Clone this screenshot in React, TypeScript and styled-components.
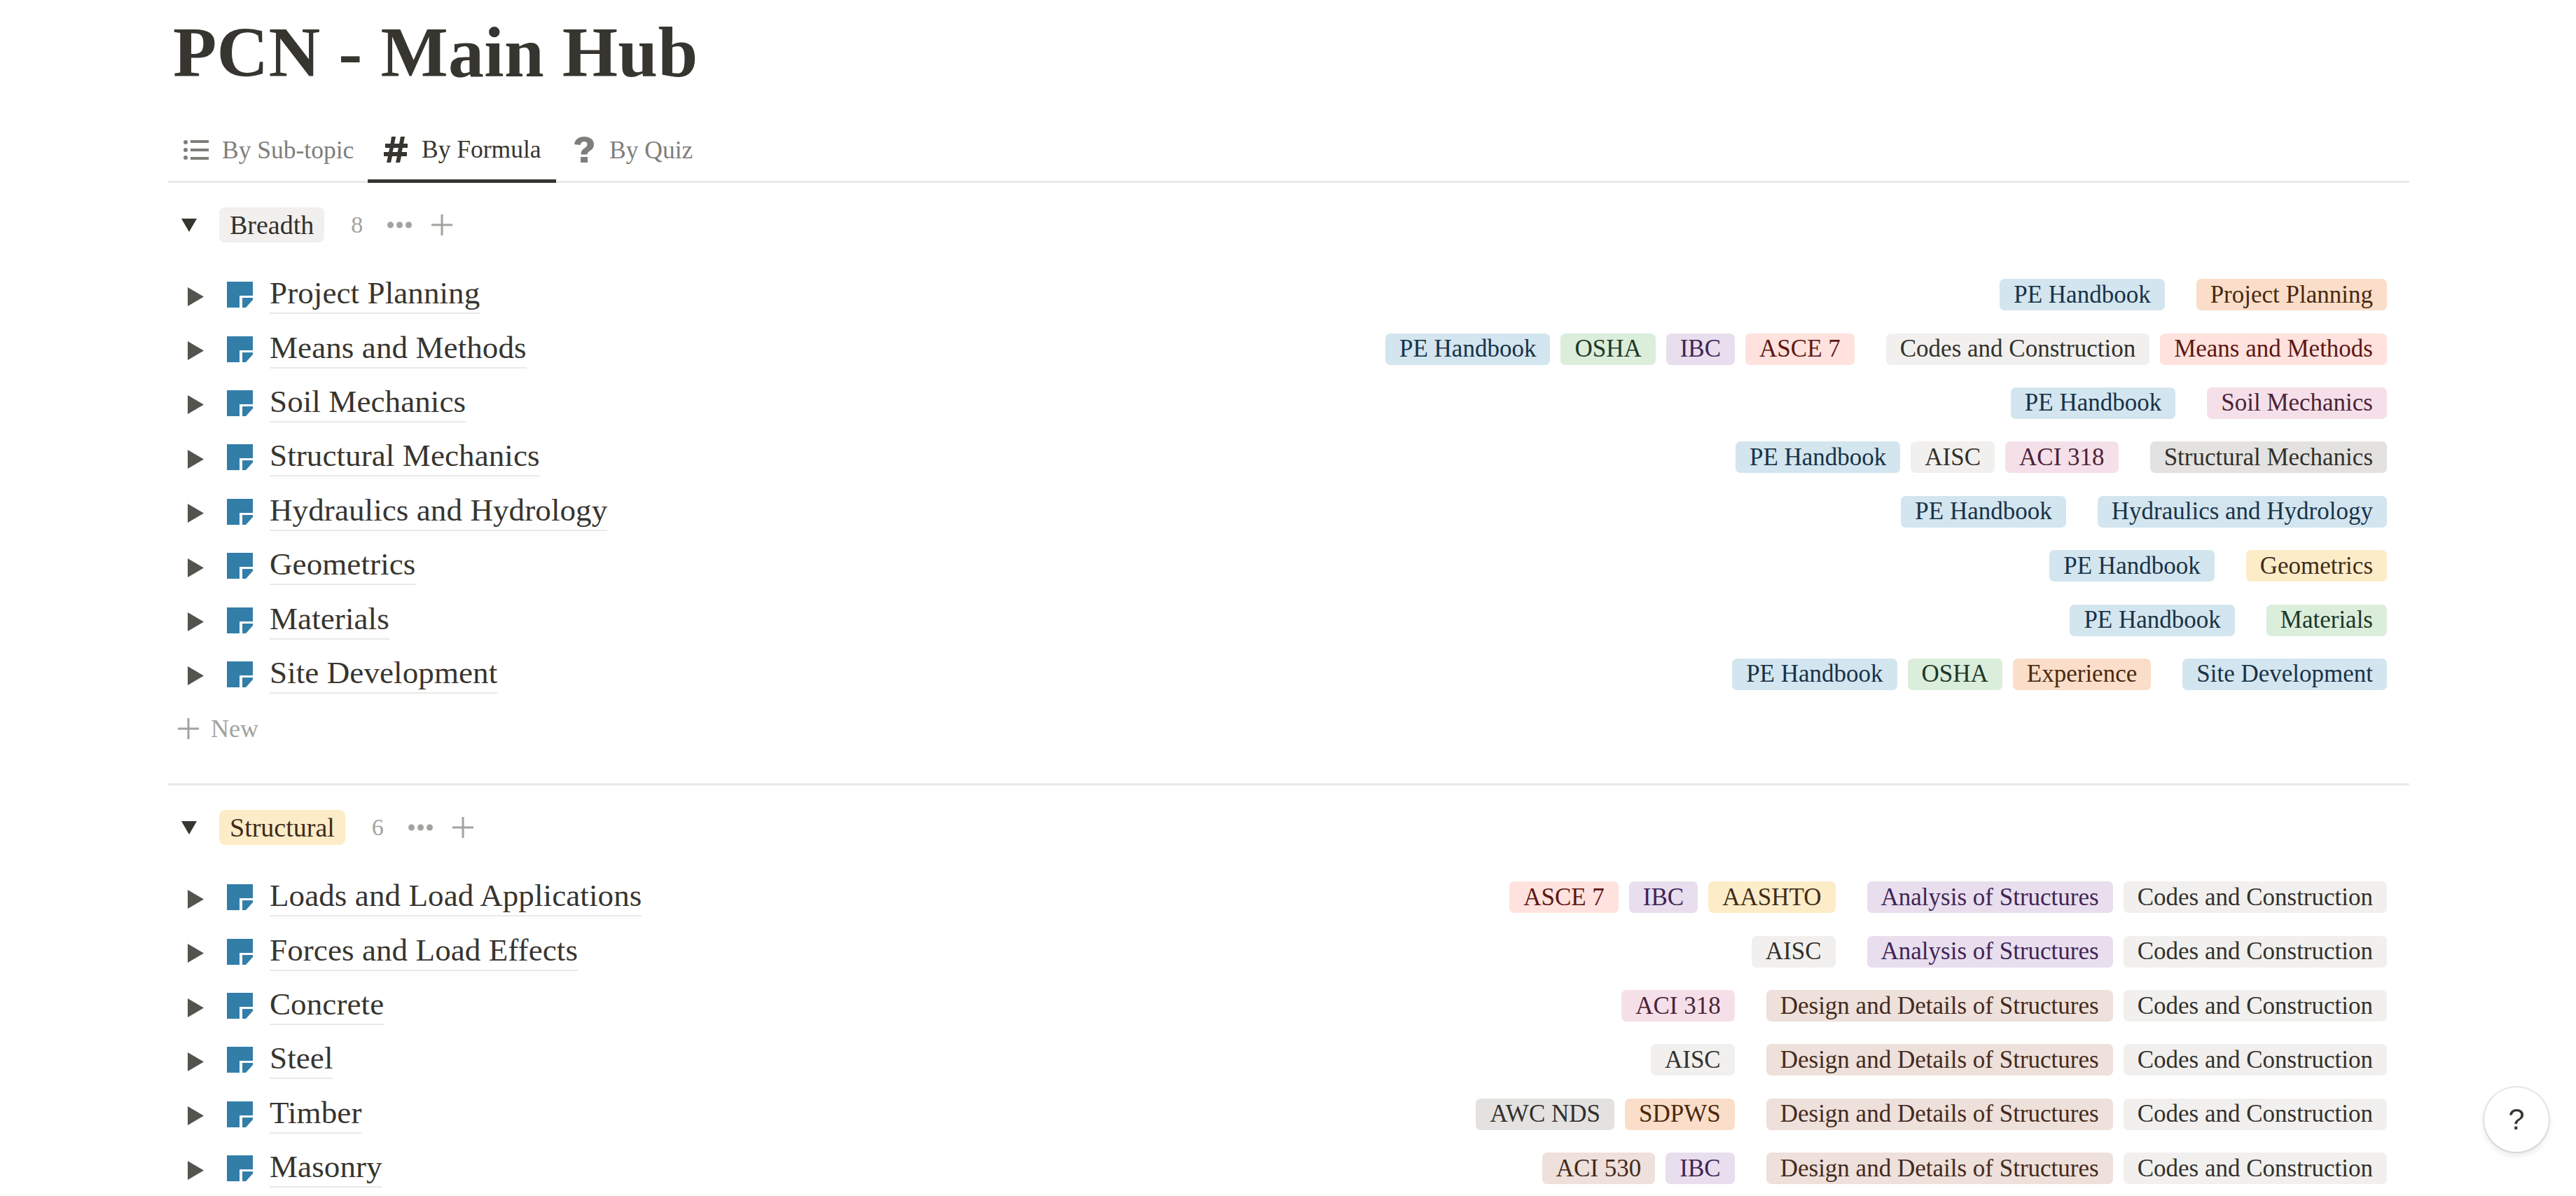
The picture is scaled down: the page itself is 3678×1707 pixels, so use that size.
import React from 'react';
import styled, { createGlobalStyle } from 'styled-components';

type Tone = 'blue' | 'orange' | 'red' | 'green' | 'purple' | 'gray' | 'plain' | 'pink' | 'yellow' | 'brown';

const tones: Record<Tone, { bg: string; fg: string }> = {
  blue: { bg: '#d3e5ef', fg: '#183347' },
  orange: { bg: '#fadec9', fg: '#49290e' },
  red: { bg: '#ffe2dd', fg: '#5d1715' },
  green: { bg: '#dbeddb', fg: '#1c3829' },
  purple: { bg: '#e8deee', fg: '#412454' },
  gray: { bg: '#e3e2e0', fg: '#32302c' },
  plain: { bg: '#f1f0ee', fg: '#32302c' },
  pink: { bg: '#f5e0e9', fg: '#4c2337' },
  yellow: { bg: '#fdecc8', fg: '#402c1b' },
  brown: { bg: '#eee0da', fg: '#442a1e' },
};

interface Tag {
  label: string;
  tone: Tone;
}

interface Item {
  title: string;
  refs: Tag[];
  topics: Tag[];
}

const PE: Tag = { label: 'PE Handbook', tone: 'blue' };
const OSHA: Tag = { label: 'OSHA', tone: 'green' };
const IBC: Tag = { label: 'IBC', tone: 'purple' };
const ASCE: Tag = { label: 'ASCE 7', tone: 'red' };
const AISC: Tag = { label: 'AISC', tone: 'plain' };
const ACI318: Tag = { label: 'ACI 318', tone: 'pink' };
const CODES: Tag = { label: 'Codes and Construction', tone: 'plain' };
const ANALYSIS: Tag = { label: 'Analysis of Structures', tone: 'purple' };
const DESIGN: Tag = { label: 'Design and Details of Structures', tone: 'brown' };

const breadth: Item[] = [
  { title: 'Project Planning', refs: [PE], topics: [{ label: 'Project Planning', tone: 'orange' }] },
  { title: 'Means and Methods', refs: [PE, OSHA, IBC, ASCE], topics: [CODES, { label: 'Means and Methods', tone: 'red' }] },
  { title: 'Soil Mechanics', refs: [PE], topics: [{ label: 'Soil Mechanics', tone: 'pink' }] },
  { title: 'Structural Mechanics', refs: [PE, AISC, ACI318], topics: [{ label: 'Structural Mechanics', tone: 'gray' }] },
  { title: 'Hydraulics and Hydrology', refs: [PE], topics: [{ label: 'Hydraulics and Hydrology', tone: 'blue' }] },
  { title: 'Geometrics', refs: [PE], topics: [{ label: 'Geometrics', tone: 'yellow' }] },
  { title: 'Materials', refs: [PE], topics: [{ label: 'Materials', tone: 'green' }] },
  { title: 'Site Development', refs: [PE, OSHA, { label: 'Experience', tone: 'orange' }], topics: [{ label: 'Site Development', tone: 'blue' }] },
];

const structural: Item[] = [
  { title: 'Loads and Load Applications', refs: [ASCE, IBC, { label: 'AASHTO', tone: 'yellow' }], topics: [ANALYSIS, CODES] },
  { title: 'Forces and Load Effects', refs: [AISC], topics: [ANALYSIS, CODES] },
  { title: 'Concrete', refs: [ACI318], topics: [DESIGN, CODES] },
  { title: 'Steel', refs: [AISC], topics: [DESIGN, CODES] },
  { title: 'Timber', refs: [{ label: 'AWC NDS', tone: 'gray' }, { label: 'SDPWS', tone: 'orange' }], topics: [DESIGN, CODES] },
  { title: 'Masonry', refs: [{ label: 'ACI 530', tone: 'brown' }, IBC], topics: [DESIGN, CODES] },
];

const GlobalStyle = createGlobalStyle`
  html, body {
    margin: 0;
    height: 100%;
    overflow: hidden;
    background: #fff;
  }
  body {
    font-family: "Liberation Serif", "Times New Roman", serif;
    color: #37352f;
  }
`;

const Page = styled.div`
  width: 3200px;
  margin-left: 240px;
`;

const Title = styled.h1`
  margin: 0;
  padding-left: 7px;
  height: 150px;
  font-size: 102px;
  line-height: 150px;
  font-weight: 700;
  letter-spacing: 0.3px;
  color: #37352f;
`;

const TabBar = styled.div`
  display: flex;
  height: 108px;
  align-items: stretch;
  border-bottom: 3px solid #e9e9e7;
`;

const Tab = styled.div<{ $active?: boolean; $width: number; $lead: number; $gap: number }>`
  display: flex;
  align-items: center;
  gap: ${(p) => p.$gap}px;
  width: ${(p) => p.$width}px;
  padding: ${(p) => (p.$active ? '20px' : '16px')} 0 0 ${(p) => p.$lead}px;
  box-sizing: border-box;
  margin-bottom: -3px;
  font-size: 35.5px;
  color: ${(p) => (p.$active ? '#37352f' : '#7f7e7a')};
  border-bottom: ${(p) => (p.$active ? '5px solid #37352f' : '0')};
`;

const TabIcon = styled.svg`
  flex: none;
  fill: currentColor;
`;

const Group = styled.section<{ $divided?: boolean }>`
  border-bottom: ${(p) => (p.$divided ? '3px solid #e9e9e7' : '0')};
  padding-bottom: ${(p) => (p.$divided ? '40px' : '0')};
`;

const GroupHead = styled.div`
  display: flex;
  align-items: center;
  height: 50px;
  padding: 35px 0 36px 19px;
`;

const Caret = styled.svg`
  flex: none;
  width: 22px;
  height: 19px;
  margin-right: 32px;
  fill: #37352f;
`;

const GroupPill = styled.span<{ $tone: Tone }>`
  display: inline-flex;
  align-items: center;
  height: 50px;
  padding: 0 15px;
  border-radius: 8px;
  font-size: 38px;
  background: ${(p) => tones[p.$tone].bg};
  color: ${(p) => tones[p.$tone].fg};
`;

const Count = styled.span`
  margin-left: 38px;
  font-size: 34px;
  color: #a3a29e;
`;

const Dots = styled.svg`
  width: 35px;
  height: 10px;
  margin-left: 35px;
  fill: #a3a29e;
`;

const Plus = styled.svg`
  width: 30px;
  height: 30px;
  fill: #a3a29e;
`;

const HeadPlus = styled(Plus)`
  margin-left: 28px;
`;

const Row = styled.div`
  display: flex;
  align-items: center;
  justify-content: space-between;
  height: 77.4px;
  padding: 0 32px 0 28px;
`;

const RowLead = styled.div`
  display: flex;
  align-items: center;
`;

const RowCaret = styled.svg`
  flex: none;
  width: 23px;
  height: 27px;
  margin: 5px 33px 0 0;
  fill: #55534e;
`;

const PageIcon = styled.svg`
  flex: none;
  width: 37px;
  height: 37px;
  margin-right: 24px;
  fill: #337ea9;
`;

const RowTitle = styled.span`
  font-size: 45px;
  line-height: 50px;
  letter-spacing: 0.1px;
  padding-bottom: 3px;
  color: #37352f;
  border-bottom: 2px solid #e9e9e7;
`;

const Tags = styled.div`
  display: flex;
  gap: 45px;
`;

const TagGroup = styled.div`
  display: flex;
  gap: 15px;
`;

const Pill = styled.span<{ $tone: Tone }>`
  display: inline-flex;
  align-items: center;
  height: 45px;
  padding: 0 20px;
  border-radius: 7px;
  font-size: 35px;
  white-space: nowrap;
  background: ${(p) => tones[p.$tone].bg};
  color: ${(p) => tones[p.$tone].fg};
`;

const NewRow = styled.div`
  display: flex;
  align-items: center;
  gap: 17px;
  height: 77px;
  padding-left: 14px;
  font-size: 36px;
  color: #a3a29e;
`;

const HelpButton = styled.div`
  position: fixed;
  left: 3547px;
  top: 1552px;
  width: 92px;
  height: 92px;
  box-sizing: border-box;
  display: flex;
  align-items: center;
  justify-content: center;
  border-radius: 50%;
  background: #fff;
  font-family: "Liberation Sans", Arial, sans-serif;
  font-size: 42px;
  color: #37352f;
  box-shadow: 0 0 0 2px rgba(15, 15, 15, 0.1), 0 5px 10px rgba(15, 15, 15, 0.1);
`;

function PlusIcon() {
  return (
    <path d="M13.5 0h3v13.5H30v3H16.5V30h-3V16.5H0v-3h13.5z" />
  );
}

function ItemRow({ item }: { item: Item }) {
  return (
    <Row>
      <RowLead>
        <RowCaret viewBox="0 0 23 27">
          <path d="M0 0L23 13.5L0 27z" />
        </RowCaret>
        <PageIcon viewBox="0 0 37 37">
          <path d="M0 0H37V20H18V37H0z" />
          <path d="M22 23H37V26L27 37H22z" />
        </PageIcon>
        <RowTitle>{item.title}</RowTitle>
      </RowLead>
      <Tags>
        <TagGroup>
          {item.refs.map((t) => (
            <Pill key={t.label} $tone={t.tone}>{t.label}</Pill>
          ))}
        </TagGroup>
        <TagGroup>
          {item.topics.map((t) => (
            <Pill key={t.label} $tone={t.tone}>{t.label}</Pill>
          ))}
        </TagGroup>
      </Tags>
    </Row>
  );
}

function GroupHeader({ label, tone, count }: { label: string; tone: Tone; count: number }) {
  return (
    <GroupHead>
      <Caret viewBox="0 0 22 19">
        <path d="M0 0H22L11 19z" />
      </Caret>
      <GroupPill $tone={tone}>{label}</GroupPill>
      <Count>{count}</Count>
      <Dots viewBox="0 0 35 10">
        <circle cx="4.5" cy="5" r="4.5" />
        <circle cx="17.5" cy="5" r="4.5" />
        <circle cx="30.5" cy="5" r="4.5" />
      </Dots>
      <HeadPlus viewBox="0 0 30 30">
        <PlusIcon />
      </HeadPlus>
    </GroupHead>
  );
}

export default function App() {
  return (
    <Page>
      <GlobalStyle />
      <Title>PCN - Main Hub</Title>
      <TabBar>
        <Tab $width={285} $lead={22} $gap={19}>
          <TabIcon width="36" height="28" viewBox="0 0 36 28">
            <circle cx="3" cy="3" r="3" />
            <circle cx="3" cy="14" r="3" />
            <circle cx="3" cy="25" r="3" />
            <rect x="10" y="0" width="26" height="4" />
            <rect x="10" y="12" width="26" height="4" />
            <rect x="10" y="24" width="26" height="4" />
          </TabIcon>
          By Sub-topic
        </Tab>
        <Tab $active $width={269} $lead={23} $gap={20}>
          <TabIcon width="34" height="37" viewBox="0 0 34 37">
            <path d="M11 0h6l-2 10h7l2-10h6l-2 10h6v6h-7l-1.500 6H33v6h-8l-2 9h-6l2-9h-7l-2 9H4l2-9H0v-6h7l1.500-6H2v-6h7.500zM14 16l-1.500 6h7l1.500-6z" fillRule="evenodd" />
          </TabIcon>
          By Formula
        </Tab>
        <Tab $width={220} $lead={26} $gap={22}>
          <TabIcon width="28" height="37" viewBox="0 0 28 37">
            <path d="M14 0c8 0 14 4 14 11 0 5-3 7.500-6 9.500-2 1.500-3.500 2.500-3.500 5H9.500c0-5 2-7 5-9 2-1.500 4-2.800 4-5.500 0-2.500-2-4-4.500-4-3 0-5 2-5.500 5L0 11C1 4 6 0 14 0zM9 29h10v8H9z" />
          </TabIcon>
          By Quiz
        </Tab>
      </TabBar>
      <Group $divided>
        <GroupHeader label="Breadth" tone="plain" count={8} />
        {breadth.map((item) => (
          <ItemRow key={item.title} item={item} />
        ))}
        <NewRow>
          <Plus viewBox="0 0 30 30">
            <PlusIcon />
          </Plus>
          New
        </NewRow>
      </Group>
      <Group>
        <GroupHeader label="Structural" tone="yellow" count={6} />
        {structural.map((item) => (
          <ItemRow key={item.title} item={item} />
        ))}
      </Group>
      <HelpButton>?</HelpButton>
    </Page>
  );
}
